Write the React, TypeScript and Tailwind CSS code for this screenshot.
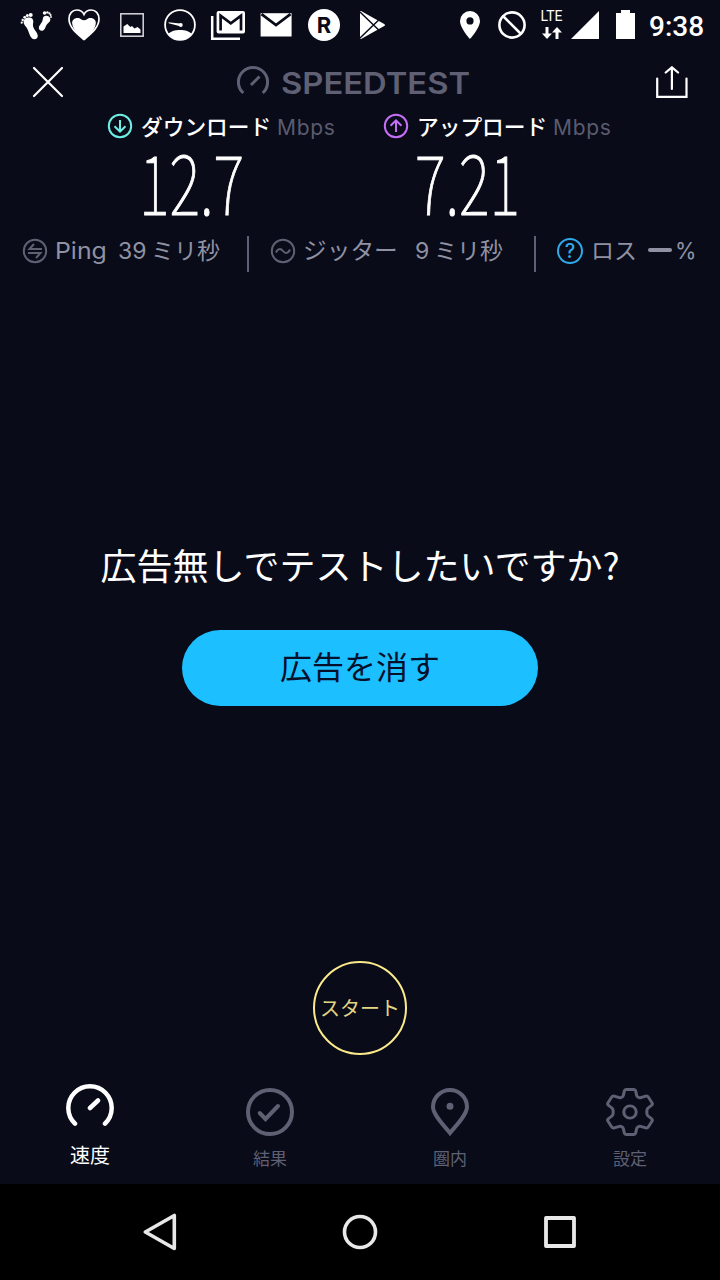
import type { ReactNode } from 'react';
import clsx from 'clsx';

interface IconProps {
  className?: string;
}

function FootprintsIcon() {
  return (
    <svg className="size-8" viewBox="0 0 32 32" fill="white">
      <path d="M3.6 13C3.6 9.6 6.5 8.4 9 8.4c3 0 4.6 1.800 4.300 4.600-.3 2.400-.9 3.600.6 6.400 1.200 2.400 3.900 4.600 3.900 7.600 0 2-1.400 3.200-3.200 3.200-2.500 0-3.700-1.700-4.800-4.200C8.300 22.500 7.800 20 6 17.800 4.700 16.200 3.600 15 3.600 13z" />
      <circle cx="1.700" cy="13.700" r="1.100" />
      <circle cx="2.700" cy="11" r="1.200" />
      <circle cx="4.700" cy="8.300" r="1.400" />
      <circle cx="7.300" cy="6.500" r="1.500" />
      <circle cx="10.700" cy="6" r="2" />
      <path d="M22.800 10c.2-2.500 2-3.600 4-3.200 2.400.5 3.900 2.300 3.500 4.500-.4 2-2.300 2.700-3.600 4.500-1.300 1.700-1.500 5.600-4.500 5.900-2.200.2-3.700-1.400-3.300-3.500.5-2.400 3.700-4.800 3.900-8.200z" />
      <circle cx="24.600" cy="4" r="1.800" />
      <circle cx="27.400" cy="3.400" r="1.200" />
      <circle cx="29.400" cy="4.400" r="1.100" />
      <circle cx="30.600" cy="6" r="1" />
      <circle cx="31" cy="8" r=".9" />
    </svg>
  );
}

function HeartIcon() {
  return (
    <svg className="size-8" viewBox="0 0 32 32">
      <path
        d="M16 30.500C9 24.500 1 18.500 1 10 1 4.500 4.500 1 8.700 1 12 1 14.800 2.800 16 5.500 17.200 2.800 20 1 23.300 1 27.500 1 31 4.500 31 10c0 8.500-8 14.500-15 20.500z"
        fill="none"
        stroke="white"
        strokeWidth="1.700"
      />
      <path
        d="M16 31C11 26.500 5 21 4.200 14.500 3.700 11.500 6 9 9.500 9c1.700 0 2.500.5 3.500 1.200 1.800 1.300 4.200 1.300 6 0C20 9.500 20.800 9 22.500 9c3.500 0 5.800 2.500 5.300 5.500C27 21 21 26.500 16 31z"
        fill="white"
      />
    </svg>
  );
}

function PictureIcon() {
  return (
    <svg className="size-8" viewBox="0 0 32 32">
      <rect x="4.800" y="4.800" width="22.400" height="22.400" fill="none" stroke="#d8d8dc" strokeWidth="1.500" />
      <path d="M7.500 24v-6.500l3.800-2.500 3 3 1.700-1 2.500 2.500 3-1.500 3 2.500V24z" fill="white" />
    </svg>
  );
}

function GaugeIcon() {
  return (
    <svg className="size-8" viewBox="0 0 32 32">
      <circle cx="16" cy="16" r="14.900" fill="none" stroke="white" strokeWidth="1.800" />
      <path d="M4 25.200C8 19.500 24 19.500 28 25.200 22 33 10 33 4 25.200z" fill="white" />
      <path d="M4.500 13.200l11.500 1.300v2.700l-11.300-3z" fill="white" />
      <circle cx="16.800" cy="16" r="1.900" fill="white" />
    </svg>
  );
}

function GmailStackIcon() {
  return (
    <svg className="-mx-0.5 h-8 w-9" viewBox="0 0 36 32">
      <path d="M2.200 7v22.700H30" fill="none" stroke="white" strokeWidth="2.500" />
      <rect x="6.600" y="2" width="28.400" height="22.400" rx="2" fill="white" />
      <path d="M10.600 21.500V6.700l10.200 7.600L31 6.700v14.800" fill="none" stroke="#090b19" strokeWidth="2.700" />
    </svg>
  );
}

function MailIcon() {
  return (
    <svg className="size-8" viewBox="0 0 32 32">
      <path d="M.6 4.200h31v23.300H.6z" fill="white" />
      <path d="M1.500 5.200L16 16 30.500 5.200" fill="none" stroke="#090b19" strokeWidth="2.700" />
    </svg>
  );
}

function PlayStoreIcon() {
  return (
    <svg className="size-8" viewBox="0 0 32 32">
      <path d="M4 3.200c0-1 .8-1.400 1.500-.9l22.700 12.600c1 .6 1 1.600 0 2.200L5.500 29.700c-.8.500-1.500.1-1.500-.9z" fill="white" />
      <path d="M4 3l19 18.200M4 29l19-18.200" fill="none" stroke="#090b19" strokeWidth="1.500" />
    </svg>
  );
}

function StatusBar() {
  return (
    <div className="flex h-[50px] items-center pl-5">
      <div className="flex gap-4">
        <FootprintsIcon />
        <HeartIcon />
        <PictureIcon />
        <GaugeIcon />
        <GmailStackIcon />
        <MailIcon />
        <div className="flex size-8 items-center justify-center rounded-full bg-white font-['Inter'] text-[22px] font-bold leading-none text-[#090b19]">
          R
        </div>
        <PlayStoreIcon />
      </div>
      <svg className="ml-[72px] h-7 w-5" viewBox="0 0 20 28" fill="white">
        <path
          fillRule="evenodd"
          d="M10 0a10 10 0 0 1 10 10c0 7-10 18-10 18S0 17 0 10A10 10 0 0 1 10 0zm0 6.300a3.600 3.600 0 1 0 0 7.200 3.600 3.600 0 0 0 0-7.200z"
        />
      </svg>
      <svg className="ml-[18px] size-7" viewBox="0 0 28 28" fill="none" stroke="white" strokeWidth="2.600">
        <circle cx="14" cy="14" r="12.600" />
        <path d="M5 5l18 18" />
      </svg>
      <div className="ml-3.5 flex h-8 w-[23px] flex-col items-center">
        <span className="mt-px font-['Roboto'] text-[14px] leading-[13px]">LTE</span>
        <svg className="mt-[4px] h-3 w-5" viewBox="0 0 20 12" fill="white">
          <path d="M3.500 0h3v6.500H10L5 12 0 6.500h3.500zM13.500 12h3V5.500H20L15 0l-5 5.500h3.500z" />
        </svg>
      </div>
      <svg className="ml-2 h-7 w-7" viewBox="0 0 28 28" fill="white">
        <path d="M28 0v28H0z" />
      </svg>
      <svg className="mb-px ml-[17px] h-[29px] w-[19px]" viewBox="0 0 19 29" fill="white">
        <path d="M5 0h9v3h5v26H0V3h5z" />
      </svg>
      <span className="ml-3.5 mt-1 font-['Roboto'] text-[28px] font-medium leading-none">9:38</span>
    </div>
  );
}

function Header() {
  return (
    <div className="flex h-[60px] items-center pt-1 pl-8">
      <svg className="size-8" viewBox="0 0 32 32" fill="none" stroke="white" strokeWidth="2.200" strokeLinecap="round">
        <path d="M2 2l28 28M30 2L2 30" />
      </svg>
      <svg className="mb-0.5 ml-[173px] h-8 w-8" viewBox="0 0 32 32" fill="none" stroke="#5f6073" strokeWidth="3">
        <path d="M6.300 28A14.600 14.600 0 1 1 25.700 28M14 20l8.500-8.500" />
      </svg>
      <span className="mt-0.5 ml-3 w-[188px] origin-left scale-x-[1.092] whitespace-nowrap font-['Inter'] text-[30px] font-semibold leading-none text-[#5f6073]">
        SPEEDTEST
      </span>
      <svg className="ml-[187px] h-8 w-8" viewBox="0 0 32 32" fill="none" stroke="white" strokeWidth="2.200" strokeLinecap="round">
        <path d="M1.200 12.500v18.300h29.300V12.500M15.900 23V2M9.700 6.500l6.200-5.200 6.200 5.200" />
      </svg>
    </div>
  );
}

interface ResultProps {
  label: string;
  value: string;
  icon: ReactNode;
}

function Result({ label, value, icon }: ResultProps) {
  return (
    <div className="w-[276px]">
      <div className="flex h-8 items-center">
        {icon}
        <span className="ml-2 w-[136px] whitespace-nowrap text-[21.700px] font-medium leading-none">{label}</span>
        <span className="mt-0.5 font-['Inter'] text-[21px] leading-none tracking-[0.700px] text-[#5a5b6e]">Mbps</span>
      </div>
      <div className="ml-8 h-[84px] origin-left scale-x-[0.705] whitespace-nowrap text-[83px] font-thin leading-[74px] [-webkit-text-stroke:1px_white]">
        {value}
      </div>
    </div>
  );
}

function Results() {
  return (
    <div className="flex pl-[107px]">
      <Result
        label="ダウンロード"
        value="12.7"
        icon={
          <svg className="size-[26px]" viewBox="0 0 26 26" fill="none" stroke="#6eeee4" strokeWidth="2">
            <circle cx="13" cy="13" r="11.200" />
            <path d="M13 7v11.500M7.500 13.300l5.500 5.200 5.500-5.200" />
          </svg>
        }
      />
      <Result
        label="アップロード"
        value="7.21"
        icon={
          <svg className="size-[26px]" viewBox="0 0 26 26" fill="none" stroke="#c46ff5" strokeWidth="2">
            <circle cx="13" cy="13" r="11.200" />
            <path d="M13 19V7.500M7.500 12.700L13 7.500l5.500 5.200" />
          </svg>
        }
      />
    </div>
  );
}

function Metrics() {
  return (
    <div className="mt-[10px] flex h-9 items-start pl-[22px] text-[23px] leading-[27px] whitespace-nowrap text-[#9092a4]">
      <svg className="mt-0.5 size-[26px]" viewBox="0 0 26 26" fill="none" stroke="#5f6073" strokeWidth="2">
        <circle cx="13" cy="13" r="11.200" />
        <path d="M20 11H7.500L12 6M6 15h12.500L14 20" />
      </svg>
      <span className="ml-[7px] w-[63px] origin-left scale-x-[1.080] font-['Inter'] leading-[30px]">Ping</span>
      <span className="w-[33px] font-['Inter'] leading-[30px]">39</span>
      <span className="w-[96px]">ミリ秒</span>
      <div className="h-9 w-0.5 bg-[#5f6073]" />
      <svg className="ml-[21px] mt-0.5 size-[26px]" viewBox="0 0 26 26" fill="none" stroke="#5f6073" strokeWidth="2">
        <circle cx="13" cy="13" r="11.200" />
        <path d="M6 14.500c2-4.500 5-4 7-1.500s5 3 7-1.500" />
      </svg>
      <span className="ml-[7px] w-[112px] text-[23.700px]">ジッター</span>
      <span className="w-[19px] font-['Inter'] leading-[30px]">9</span>
      <span className="w-[100px]">ミリ秒</span>
      <div className="h-9 w-0.5 bg-[#5f6073]" />
      <div className="ml-[21px] mt-0.5 flex size-[26px] items-center justify-center rounded-full border-2 border-[#2fa9e8] font-['Inter'] text-[20px] font-medium leading-none text-[#2fa9e8]">
        ?
      </div>
      <span className="ml-2 w-[57px]">ロス</span>
      <div className="mt-3 h-1 w-6 rounded-full bg-[#9092a4]" />
      <span className="ml-[3px] origin-left scale-x-[0.950] font-['Inter'] leading-[30px]">%</span>
    </div>
  );
}

function SpeedIcon({ className }: IconProps) {
  return (
    <svg className={className} viewBox="0 0 48 48" fill="none" stroke="currentColor" strokeWidth="4.500" strokeLinecap="round">
      <path d="M9 39.700A21.700 21.700 0 1 1 39 39.700M24 24l8-7.500" />
    </svg>
  );
}

function ResultsIcon({ className }: IconProps) {
  return (
    <svg className={className} viewBox="0 0 48 48" fill="none" stroke="currentColor" strokeWidth="4" strokeLinecap="round">
      <circle cx="24" cy="24" r="22" />
      <path d="M13.700 25l5.800 6L32 18" />
    </svg>
  );
}

function CoverageIcon({ className }: IconProps) {
  return (
    <svg className={className} viewBox="0 0 48 48" fill="none" stroke="currentColor" strokeWidth="4">
      <path d="M24 45C19 38.500 7 27 7 19a17 17 0 0 1 34 0c0 8-12 19.500-17 26z" />
      <circle cx="24" cy="18.300" r="3.500" fill="currentColor" stroke="none" />
    </svg>
  );
}

function SettingsIcon({ className }: IconProps) {
  return (
    <svg
      className={className}
      viewBox="2 0 44 48"
      preserveAspectRatio="none"
      fill="none"
      stroke="currentColor"
      strokeWidth="2.800"
      strokeLinejoin="round"
    >
      <path d="M20.500 1.500h7c1 0 1.500.6 1.700 1.500l.9 4.500c.3 1.500 2.300 2.600 3.700 2.100l4.600-1.500c1-.3 1.800 0 2.300.8l3.500 6c.5.900.4 1.700-.4 2.400l-3.500 3c-1.200 1.200-1.200 6.200 0 7.400l3.500 3c.8.700.9 1.500.4 2.400l-3.500 6c-.5.800-1.300 1.100-2.300.8l-4.600-1.500c-1.400-.5-3.400.6-3.700 2.100l-.9 4.500c-.2.900-.7 1.500-1.700 1.500h-7c-1 0-1.500-.6-1.700-1.500l-.9-4.500c-.3-1.500-2.300-2.600-3.700-2.100l-4.600 1.500c-1 .3-1.800 0-2.300-.8l-3.500-6c-.5-.9-.4-1.700.4-2.400l3.500-3c1.200-1.200 1.200-6.200 0-7.400l-3.500-3c-.8-.7-.9-1.500-.4-2.400l3.500-6c.5-.8 1.300-1.100 2.300-.8l4.600 1.500c1.400.5 3.400-.6 3.700-2.100l.9-4.500c.2-.9.700-1.500 1.700-1.500z" />
      <ellipse cx="24" cy="24" rx="5.700" ry="6.200" />
    </svg>
  );
}

const tabs = [
  { label: '速度', Icon: SpeedIcon, active: true },
  { label: '結果', Icon: ResultsIcon, active: false },
  { label: '圏内', Icon: CoverageIcon, active: false },
  { label: '設定', Icon: SettingsIcon, active: false },
];

function TabBar() {
  return (
    <nav className="grid h-[104px] grid-cols-4">
      {tabs.map(({ label, Icon, active }) => (
        <div
          key={label}
          className={clsx('flex flex-col items-center', active ? 'pt-1 text-white' : 'pt-2 text-[#5f6073]')}
        >
          <Icon className="size-12" />
          <span className={clsx('mt-[13px]', active ? 'text-[20px] leading-5' : 'text-[17px] leading-[18px]')}>
            {label}
          </span>
        </div>
      ))}
    </nav>
  );
}

function NavigationBar() {
  return (
    <div className="flex h-24 items-center justify-between bg-black px-[140px]">
      <svg className="size-10" viewBox="0 0 40 40" fill="none" stroke="#e8e8e8" strokeWidth="3.600" strokeLinejoin="round">
        <path d="M34.300 3.500v33L5.300 20z" />
      </svg>
      <svg className="size-10" viewBox="0 0 40 40" fill="none" stroke="#e8e8e8" strokeWidth="3.600">
        <circle cx="20" cy="20" r="15.500" />
      </svg>
      <svg className="size-10" viewBox="0 0 40 40" fill="none" stroke="#e8e8e8" strokeWidth="3.800" strokeLinejoin="round">
        <path d="M6 6h28v28H6z" />
      </svg>
    </div>
  );
}

export default function App() {
  return (
    <div className="flex h-[1280px] w-[720px] flex-col overflow-hidden bg-[#090b19] font-['Noto_Sans_CJK_JP',sans-serif] text-white">
      <StatusBar />
      <Header />
      <Results />
      <Metrics />
      <main className="flex flex-1 flex-col items-center">
        <h1 className="mt-[274px] whitespace-nowrap text-[36px] leading-9">広告無しでテストしたいですか?</h1>
        <button className="mt-12 h-[76px] w-[356px] rounded-full bg-[#1cbfff] pb-1.5 text-[32px] leading-none text-[#06102a]">
          広告を消す
        </button>
        <button className="mt-[255px] size-[94px] rounded-full border-[2.500px] border-[#fbea8b] text-[20px] leading-none whitespace-nowrap text-[#e3d683]">
          スタート
        </button>
      </main>
      <TabBar />
      <NavigationBar />
    </div>
  );
}
